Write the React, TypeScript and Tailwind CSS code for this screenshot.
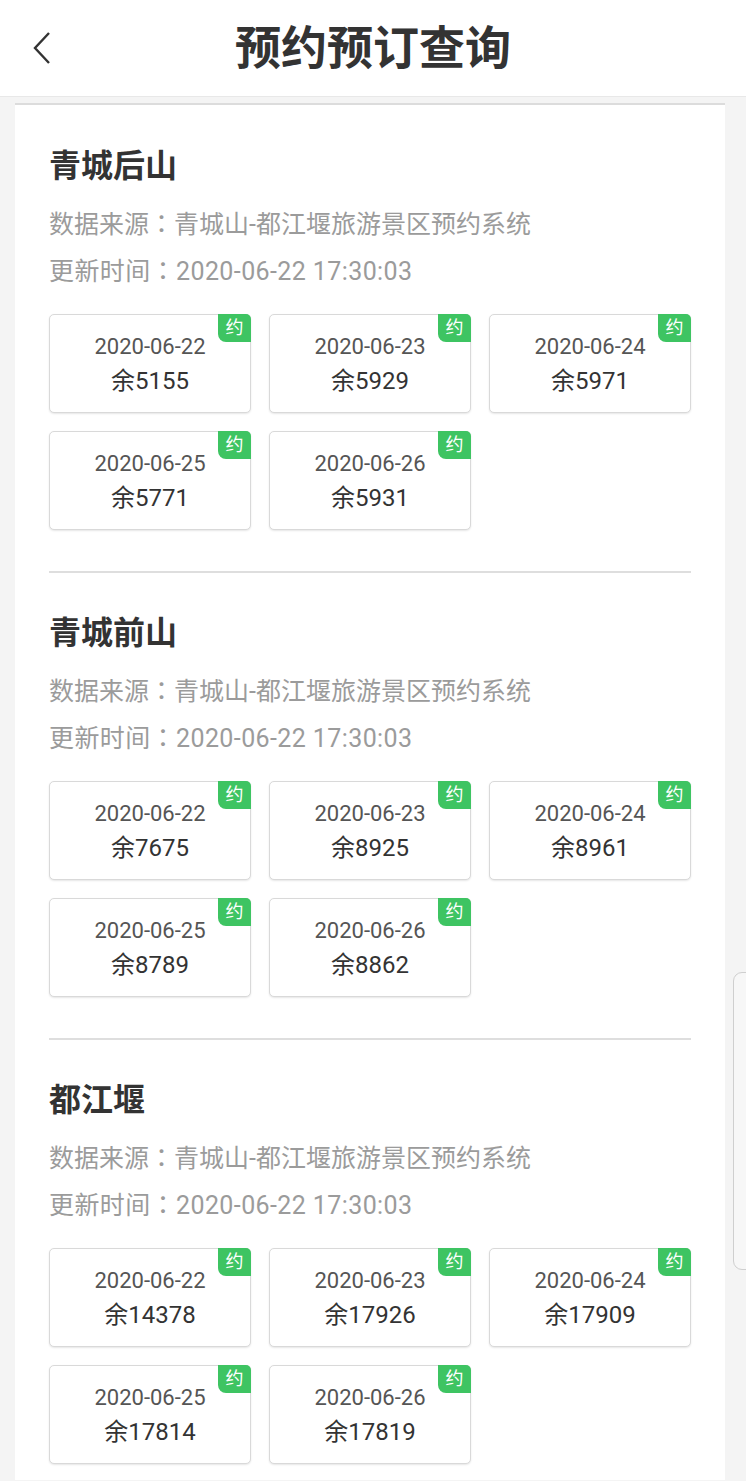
const sections = [
  {
    name: "青城后山",
    slots: [
      { date: "2020-06-22", left: 5155 },
      { date: "2020-06-23", left: 5929 },
      { date: "2020-06-24", left: 5971 },
      { date: "2020-06-25", left: 5771 },
      { date: "2020-06-26", left: 5931 },
    ],
  },
  {
    name: "青城前山",
    slots: [
      { date: "2020-06-22", left: 7675 },
      { date: "2020-06-23", left: 8925 },
      { date: "2020-06-24", left: 8961 },
      { date: "2020-06-25", left: 8789 },
      { date: "2020-06-26", left: 8862 },
    ],
  },
  {
    name: "都江堰",
    slots: [
      { date: "2020-06-22", left: 14378 },
      { date: "2020-06-23", left: 17926 },
      { date: "2020-06-24", left: 17909 },
      { date: "2020-06-25", left: 17814 },
      { date: "2020-06-26", left: 17819 },
    ],
  },
];

// centred full-width colon (SC puts it at the left of the cell)
function Colon() {
  return <span style={{ fontFamily: "'Noto Sans CJK TC', sans-serif" }}>：</span>;
}

function SlotTile({ date, left }: { date: string; left: number }) {
  return (
    <div className="relative h-[99px] rounded-[5px] border border-[#d9d9d9] bg-white pt-[17px] text-center shadow-[0_1px_2px_rgba(0,0,0,0.10)]">
      <div className="text-[22px] leading-[30px] text-[#555]">{date}</div>
      <div className="mt-[2px] text-[24px] leading-[34px] text-[#333]">余{left}</div>
      {/* booking badge */}
      <div className="absolute -right-px -top-px flex h-[28px] w-[33px] items-center justify-center rounded-bl-[8px] rounded-tr-[5px] bg-[#3ec462] text-[18px] leading-none text-white">
        约
      </div>
    </div>
  );
}

export default function App() {
  return (
    <div
      className="min-h-[1481px] bg-[#f4f4f4]"
      style={{ fontFamily: "Roboto, 'Noto Sans CJK SC', sans-serif" }}
    >
      {/* Header */}
      <div className="relative flex h-[97px] items-center justify-center border-b border-[#e8e8e8] bg-white">
        <svg
          className="absolute left-[30px] top-[30px]"
          width="26"
          height="36"
          viewBox="0 0 26 36"
          fill="none"
          stroke="#333"
          strokeWidth="2.4"
        >
          <path d="M19 3 L5 18 L19 33" />
        </svg>
        <h1 className="text-[46px] font-bold leading-none text-[#333]">预约预订查询</h1>
      </div>

      <div className="ml-[15px] mr-[21px] pt-[6px]">
        <div className="border-t-2 border-[#dcdcdc] bg-white px-[34px] pb-[16px]">
          {sections.map((s, i) => (
            <div key={s.name}>
              {i > 0 && <div className="mt-[41px] h-[2px] bg-[#dedede]" />}
              <div className={i > 0 ? "pt-[40px]" : "pt-[41px]"}>
                <h2 className="text-[32px] font-bold leading-[40px] text-[#333]">{s.name}</h2>
                <div className="mt-[13px] text-[25px] leading-[47px] text-[#9b9b9b]">
                  <p className="h-[47px] overflow-hidden">
                    数据来源<Colon />青城山-都江堰旅游景区预约系统
                  </p>
                  <p className="h-[47px] overflow-hidden tracking-[0.4px]">
                    更新时间<Colon />2020-06-22 17:30:03
                  </p>
                </div>
                <div className="mt-[21px] grid grid-cols-3 gap-[18px]">
                  {s.slots.map((slot) => (
                    <SlotTile key={slot.date} date={slot.date} left={slot.left} />
                  ))}
                </div>
              </div>
            </div>
          ))}
        </div>
      </div>

      {/* side handle */}
      <div className="absolute left-[733px] top-[972px] h-[298px] w-[20px] rounded-l-[9px] border border-[#cfcfcf] bg-[#f7f7f7]" />
    </div>
  );
}
